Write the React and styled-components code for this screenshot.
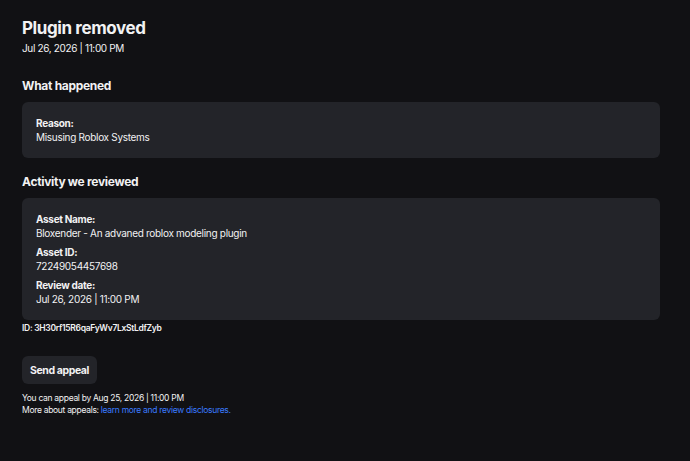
import React from 'react';
import styled, { createGlobalStyle } from 'styled-components';

const Global = createGlobalStyle`
  html, body {
    margin: 0;
    background: #111114;
  }
  body {
    font-family: Inter, "Noto Sans", sans-serif;
    color: #f2f2f3;
  }
`

const Page = styled.div`
  padding: 17px 30px 40px 22px;
  display: flex;
  flex-direction: column;
`
const Title = styled.h1`
  margin: 0;
  font-size: 17px;
  font-weight: 700;
  line-height: 22px;
  letter-spacing: -0.4px;
`
const Stamp = styled.div`
  margin-top: 2px;
  font-size: 10px;
  line-height: 14px;
  letter-spacing: -0.35px;
`
const SectionTitle = styled.h2`
  margin: ${p => p.$top}px 0 8px;
  font-size: 12px;
  font-weight: 700;
  line-height: 16px;
  letter-spacing: -0.3px;
`
const Card = styled.div`
  background: #232429;
  border-radius: 6px;
  padding: 15px 14px 14px;
  display: flex;
  flex-direction: column;
  gap: 6px;
`
const Field = styled.div`
  display: flex;
  flex-direction: column;
`
const Label = styled.div`
  font-size: 10px;
  font-weight: 700;
  line-height: 13px;
  letter-spacing: -0.3px;
`
const Value = styled.div`
  font-size: 10px;
  line-height: 14px;
  letter-spacing: -0.3px;
`
const RefId = styled.div`
  margin-top: 2px;
  font-size: 8.5px;
  font-weight: 600;
  line-height: 12px;
  letter-spacing: -0.3px;
`
const Button = styled.button`
  align-self: flex-start;
  margin-top: 22px;
  background: #232429;
  color: #f2f2f3;
  border: none;
  border-radius: 6px;
  padding: 0 8px;
  height: 28px;
  font-family: inherit;
  font-size: 10.5px;
  font-weight: 700;
  letter-spacing: -0.4px;
`
const Notes = styled.div`
  margin-top: 8px;
  display: flex;
  flex-direction: column;
`
const Note = styled.div`
  font-size: 8.5px;
  line-height: 12px;
  letter-spacing: -0.3px;
`
const Link = styled.a`
  color: #3a7bff;
  text-decoration: none;
`

const fields = [
  ['Asset Name:', 'Bloxender - An advaned roblox modeling plugin'],
  ['Asset ID:', '72249054457698'],
  ['Review date:', 'Jul 26, 2026 | 11:00 PM'],
]

export default function App() {
  return (
    <>
      <Global />
      <Page>
        <Title>Plugin removed</Title>
        <Stamp>Jul 26, 2026 | 11:00 PM</Stamp>

        <SectionTitle $top={23}>What happened</SectionTitle>
        <Card>
          <Field>
            <Label>Reason:</Label>
            <Value>Misusing Roblox Systems</Value>
          </Field>
        </Card>

        <SectionTitle $top={16}>Activity we reviewed</SectionTitle>
        <Card>
          {fields.map(([k, v]) => (
            <Field key={k}>
              <Label>{k}</Label>
              <Value>{v}</Value>
            </Field>
          ))}
        </Card>
        <RefId>ID: 3H30rf15R6qaFyWv7LxStLdfZyb</RefId>

        <Button>Send appeal</Button>
        <Notes>
          <Note>You can appeal by Aug 25, 2026 | 11:00 PM</Note>
          <Note>More about appeals: <Link href="#">learn more and review disclosures.</Link></Note>
        </Notes>
      </Page>
    </>
  )
}
